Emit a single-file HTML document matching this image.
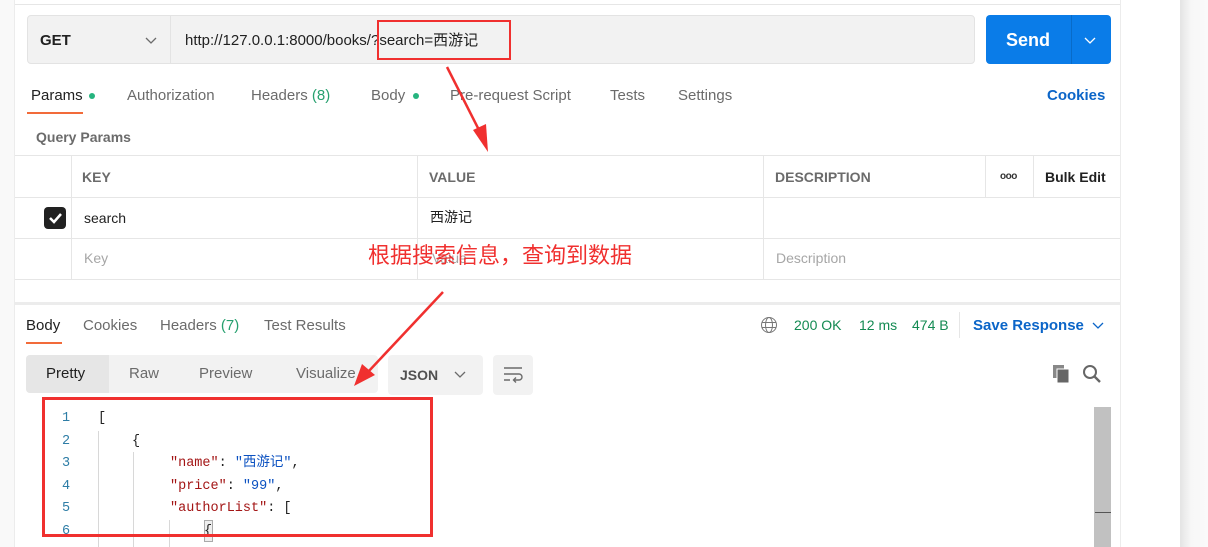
<!DOCTYPE html>
<html><head><meta charset="utf-8"><style>
*{margin:0;padding:0;box-sizing:border-box}
body{width:1208px;height:547px;overflow:hidden;background:#fff;font-family:"Liberation Sans","Noto Sans CJK SC",sans-serif;position:relative;color:#505050}
.a{position:absolute;white-space:nowrap;line-height:18px}
.t{font-size:15px;color:#6b6b6b}
.mono{font-family:"Liberation Mono","Noto Sans CJK SC",monospace;font-size:13.5px;line-height:18px;height:18px}
.hl{position:absolute;background:#e6e6e6;height:1px}
.vl{position:absolute;background:#e6e6e6;width:1px}
</style></head><body>
<div class="a" style="left:0;top:0;width:15px;height:547px;background:#f9f9f9;border-right:1px solid #ececec"></div>
<div class="a" style="left:1120px;top:0;width:1px;height:547px;background:#ececec"></div>
<div class="a" style="left:1180px;top:0;width:28px;height:547px;background:linear-gradient(90deg,#e4e4e4,#f7f7f7 40%,#fafafa)"></div>
<div class="hl" style="left:15px;top:4px;width:1105px"></div>

<div class="a" style="left:27px;top:15px;width:948px;height:49px;background:#f2f2f2;border:1px solid #e3e3e3;border-radius:4px"></div>
<div class="vl" style="left:170px;top:16px;height:47px;background:#e3e3e3"></div>
<div class="a" style="left:40px;top:32px;font-size:15px;font-weight:bold;color:#212121">GET</div>
<svg class="a" style="left:145px;top:35px" width="12" height="10"><path d="M1 3 L6 8 L11 3" stroke="#6b6b6b" stroke-width="1.3" fill="none"/></svg>
<div class="a" style="left:185px;top:32px;font-size:15px;color:#212121">http://127.0.0.1:8000/books/?search=西游记</div>

<div class="a" style="left:986px;top:15px;width:125px;height:49px;background:#0a7ce8;border-radius:4px"></div>
<div class="vl" style="left:1071px;top:15px;height:49px;background:#086bc8"></div>
<div class="a" style="left:1006px;top:31px;font-size:18px;font-weight:bold;color:#fff">Send</div>
<svg class="a" style="left:1084px;top:35px" width="12" height="10"><path d="M1 3 L6 8 L11 3" stroke="#fff" stroke-width="1.3" fill="none"/></svg>

<div class="a t" style="left:31px;top:87px;color:#212121">Params</div>
<div class="a" style="left:89px;top:93px;width:6px;height:6px;border-radius:3px;background:#26b47f"></div>
<div class="a" style="left:27px;top:112px;width:56px;height:2px;background:#f26b3a"></div>
<div class="a t" style="left:127px;top:87px">Authorization</div>
<div class="a t" style="left:251px;top:87px">Headers <span style="color:#26a06f">(8)</span></div>
<div class="a t" style="left:371px;top:87px">Body</div>
<div class="a" style="left:413px;top:93px;width:6px;height:6px;border-radius:3px;background:#26b47f"></div>
<div class="a t" style="left:450px;top:87px">Pre-request Script</div>
<div class="a t" style="left:610px;top:87px">Tests</div>
<div class="a t" style="left:678px;top:87px">Settings</div>
<div class="a" style="left:1047px;top:87px;font-size:15px;font-weight:bold;color:#0b65c8">Cookies</div>
<div class="a" style="left:36px;top:128px;font-size:14px;font-weight:bold;color:#6b6b6b">Query Params</div>

<div class="hl" style="left:15px;top:155px;width:1105px"></div>
<div class="hl" style="left:15px;top:197px;width:1105px"></div>
<div class="hl" style="left:15px;top:238px;width:1105px"></div>
<div class="hl" style="left:15px;top:279px;width:1105px"></div>
<div class="vl" style="left:71px;top:155px;height:124px"></div>
<div class="vl" style="left:417px;top:155px;height:124px"></div>
<div class="vl" style="left:763px;top:155px;height:124px"></div>
<div class="vl" style="left:985px;top:155px;height:42px"></div>
<div class="vl" style="left:1033px;top:155px;height:42px"></div>
<div class="a" style="left:82px;top:168px;font-size:14px;font-weight:bold;color:#6b6b6b">KEY</div>
<div class="a" style="left:429px;top:168px;font-size:14px;font-weight:bold;color:#6b6b6b">VALUE</div>
<div class="a" style="left:775px;top:168px;font-size:14px;font-weight:bold;color:#6b6b6b">DESCRIPTION</div>
<div class="a" style="left:1000px;top:168px;font-size:10px;font-weight:bold;color:#333;letter-spacing:-0.5px">ooo</div>
<div class="a" style="left:1045px;top:168px;font-size:14px;font-weight:bold;color:#212121">Bulk Edit</div>
<div class="a" style="left:44px;top:207px;width:22px;height:22px;border-radius:4px;background:#212121"></div>
<svg class="a" style="left:44px;top:207px" width="22" height="22"><path d="M6 11 L10 15 L17 7" stroke="#fff" stroke-width="2.5" fill="none"/></svg>
<div class="a" style="left:84px;top:209px;font-size:14px;color:#212121">search</div>
<div class="a" style="left:430px;top:208px;font-size:14px;color:#212121">西游记</div>
<div class="a" style="left:84px;top:249px;font-size:14px;color:#a6a6a6">Key</div>
<div class="a" style="left:432px;top:249px;font-size:14px;color:#a6a6a6">Value</div>
<div class="a" style="left:776px;top:249px;font-size:14px;color:#a6a6a6">Description</div>
<div class="a" style="left:368px;top:242px;font-size:22px;line-height:24px;color:#f0302f;font-family:'Noto Sans CJK SC',sans-serif">根据搜索信息，查询到数据</div>

<div class="a" style="left:15px;top:302px;width:1105px;height:3px;background:#ececec"></div>

<div class="a t" style="left:26px;top:317px;color:#212121">Body</div>
<div class="a" style="left:26px;top:342px;width:36px;height:2px;background:#f26b3a"></div>
<div class="a t" style="left:83px;top:317px">Cookies</div>
<div class="a t" style="left:160px;top:317px">Headers <span style="color:#26a06f">(7)</span></div>
<div class="a t" style="left:264px;top:317px">Test Results</div>
<svg class="a" style="left:760px;top:316px" width="18" height="18"><circle cx="9" cy="9" r="7.5" stroke="#777" fill="none"/><ellipse cx="9" cy="9" rx="3.5" ry="7.5" stroke="#777" fill="none"/><path d="M1.5 6.5 H16.5 M1.5 11.5 H16.5" stroke="#777"/></svg>
<div class="a" style="left:794px;top:316px;font-size:14px;color:#138a52">200 OK</div>
<div class="a" style="left:859px;top:316px;font-size:14px;color:#138a52">12 ms</div>
<div class="a" style="left:912px;top:316px;font-size:14px;color:#138a52">474 B</div>
<div class="vl" style="left:959px;top:312px;height:26px"></div>
<div class="a" style="left:973px;top:317px;font-size:15px;font-weight:bold;color:#0b65c8">Save Response</div>
<svg class="a" style="left:1092px;top:320px" width="12" height="10"><path d="M1 3 L6 8 L11 3" stroke="#0b65c8" stroke-width="1.3" fill="none"/></svg>

<div class="a" style="left:26px;top:355px;width:352px;height:38px;background:#f2f2f2;border-radius:4px"></div>
<div class="a" style="left:26px;top:355px;width:83px;height:38px;background:#e6e6e6;border-radius:4px 0 0 4px"></div>
<div class="a t" style="left:46px;top:365px;color:#212121">Pretty</div>
<div class="a t" style="left:129px;top:365px">Raw</div>
<div class="a t" style="left:199px;top:365px">Preview</div>
<div class="a t" style="left:296px;top:365px">Visualize</div>
<div class="a" style="left:388px;top:355px;width:95px;height:40px;background:#f2f2f2;border-radius:4px"></div>
<div class="a" style="left:400px;top:366px;font-size:14px;font-weight:bold;color:#505050">JSON</div>
<svg class="a" style="left:454px;top:369px" width="12" height="10"><path d="M1 3 L6 8 L11 3" stroke="#6b6b6b" stroke-width="1.3" fill="none"/></svg>
<div class="a" style="left:493px;top:355px;width:40px;height:40px;background:#f2f2f2;border-radius:4px"></div>
<svg class="a" style="left:502px;top:365px" width="22" height="20"><path d="M2 3 H20 M2 9 H17 a3 3 0 0 1 0 6 H12 M14 12.5 L11.5 15 L14 17.5 M2 15 H8" stroke="#6b6b6b" stroke-width="1.4" fill="none"/></svg>
<svg class="a" style="left:1052px;top:364px" width="20" height="20"><rect x="1" y="1" width="11" height="13" fill="#888"/><rect x="5" y="5" width="12" height="14" fill="#666" stroke="#fff" stroke-width="1"/></svg>
<svg class="a" style="left:1082px;top:364px" width="20" height="20"><circle cx="8" cy="8" r="6" stroke="#666" stroke-width="2" fill="none"/><path d="M12.5 12.5 L18 18" stroke="#666" stroke-width="2.4"/></svg>

<div class="a" style="left:1094px;top:407px;width:17px;height:140px;background:#c1c1c1"></div>
<div class="a" style="left:1095px;top:512px;width:16px;height:1px;background:#555"></div>
<div class="vl" style="left:98px;top:431px;height:116px;background:#d8d8d8"></div>
<div class="vl" style="left:133px;top:452px;height:95px;background:#d8d8d8"></div>
<div class="vl" style="left:169px;top:520px;height:27px;background:#d8d8d8"></div>
<div class="a mono" style="left:62px;top:410px;color:#2e7da6">1</div>
<div class="a mono" style="left:62px;top:433px;color:#2e7da6">2</div>
<div class="a mono" style="left:62px;top:455px;color:#2e7da6">3</div>
<div class="a mono" style="left:62px;top:478px;color:#2e7da6">4</div>
<div class="a mono" style="left:62px;top:500px;color:#2e7da6">5</div>
<div class="a mono" style="left:62px;top:523px;color:#2e7da6">6</div>
<div class="a mono" style="left:98px;top:410px;color:#222">[</div>
<div class="a mono" style="left:132px;top:433px;color:#222">{</div>
<div class="a mono" style="left:170px;top:455px"><span style="color:#a31515">"name"</span><span style="color:#222">: </span><span style="color:#0b51c1">"西游记"</span><span style="color:#222">,</span></div>
<div class="a mono" style="left:170px;top:478px"><span style="color:#a31515">"price"</span><span style="color:#222">: </span><span style="color:#0b51c1">"99"</span><span style="color:#222">,</span></div>
<div class="a mono" style="left:170px;top:500px"><span style="color:#a31515">"authorList"</span><span style="color:#222">: [</span></div>
<div class="a" style="left:204px;top:520px;width:9px;height:22px;border:1px solid #aaa;background:#eee"></div>
<div class="a mono" style="left:204px;top:523px;color:#222">{</div>

<div class="a" style="left:377px;top:20px;width:134px;height:40px;border:2px solid #f0302f"></div>
<div class="a" style="left:42px;top:397px;width:391px;height:140px;border:3px solid #f0302f"></div>
<svg class="a" style="left:0;top:0" width="1208" height="547">
<path d="M447 67 L480 132" stroke="#f0302f" stroke-width="2.5"/>
<path d="M473 130 L488 152 L486 124 Z" fill="#f0302f"/>
<path d="M443 292 L368 372" stroke="#f0302f" stroke-width="2.5"/>
<path d="M362 364 L354 386 L375 375 Z" fill="#f0302f"/>
</svg>
</body></html>
